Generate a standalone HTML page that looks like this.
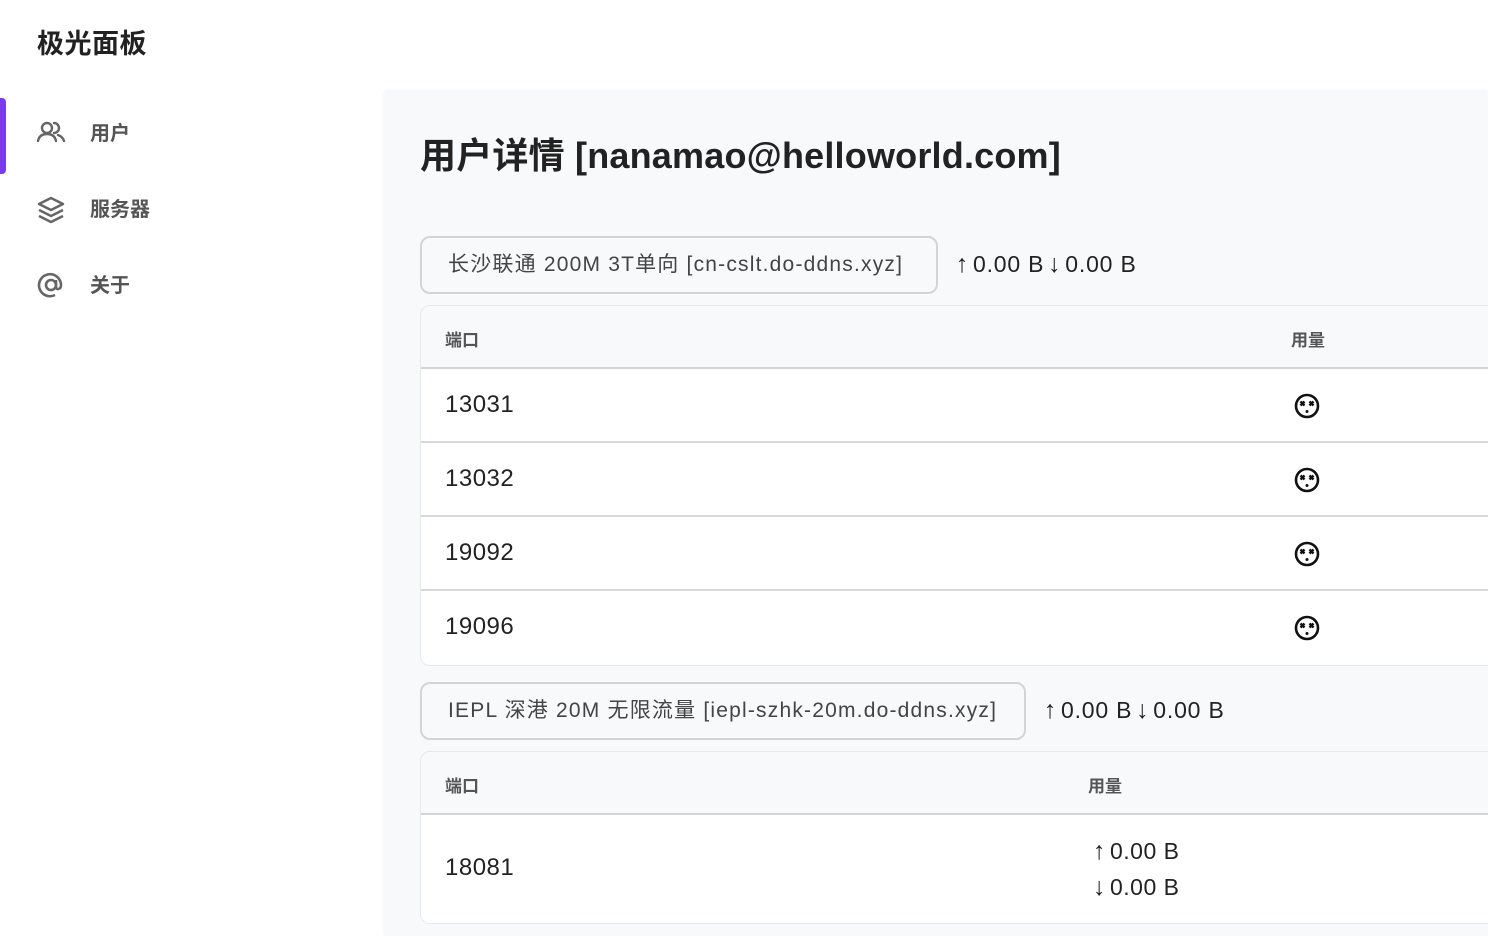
<!DOCTYPE html>
<html><head><meta charset="utf-8"><style>
*{margin:0;padding:0;box-sizing:border-box}
body{width:1488px;height:936px;overflow:hidden;background:#fff;font-family:"Liberation Sans","Noto Sans CJK SC",sans-serif;position:relative;color:#222}
.logo{position:absolute;left:37px;top:22px;font-size:27px;font-weight:bold;color:#222;letter-spacing:0.5px}
.nav{position:absolute;left:0;width:384px;height:76px}
.nav .bar{position:absolute;left:0;top:0;width:6px;height:76px;background:#7c3aed;border-radius:0 4px 4px 0}
.nav svg{position:absolute;left:37px;top:21px}
.nav span{position:absolute;left:90px;top:19px;font-size:20px;color:#555;font-weight:bold}
.main{position:absolute;left:384px;top:92px;right:0;bottom:0;background:#f8f9fb;box-shadow:0 -1px 4px rgba(0,0,0,.05)}
h1{position:absolute;left:420px;top:127px;font-size:36px;font-weight:bold;color:#222;white-space:nowrap;letter-spacing:0.2px}
.btn{position:absolute;left:420px;height:58px;border:2px solid #d4d4d6;border-radius:10px;font-size:21px;color:#444;padding:0 26px;line-height:54px;white-space:nowrap;background:#f8f9fb;letter-spacing:1.2px}
.traffic{position:absolute;font-size:23px;color:#222;white-space:nowrap;letter-spacing:0.8px}
.ar{display:inline-block;width:21px;text-align:center;font-size:25px}
.tbl{position:absolute;left:420px;width:1100px;background:#fff;border:1px solid #e8e8ea;border-radius:10px;overflow:hidden}
.th{height:63px;background:#f8f9fa;border-bottom:2px solid #d4d4d6;position:relative;font-size:17px;color:#555;font-weight:bold}
.th span,.tr span{position:absolute}
.tr{height:74px;border-bottom:2px solid #d8d8da;position:relative;font-size:24px;color:#222;letter-spacing:0.5px}
.tr:last-child{border-bottom:none}
</style></head><body>
<div class="logo">极光面板</div>
<div class="nav" style="top:98px"><div class="bar"></div>
<svg width="30" height="26" viewBox="0 0 30 26" fill="none" stroke="#666" stroke-width="2.4" stroke-linecap="round"><circle cx="10" cy="9" r="5"/><path d="M1 22c1-5 4-7 9-7s8 2 9 7"/><path d="M17 4a5 5 0 0 1 0 10M21 16c3 1 5 3 6 6"/></svg>
<span>用户</span></div>
<div class="nav" style="top:174px">
<svg width="28" height="30" viewBox="0 0 28 30" fill="none" stroke="#666" stroke-width="2.4" stroke-linejoin="round"><path d="M14 3L2 9l12 6 12-6z"/><path d="M2 15l12 6 12-6"/><path d="M2 21l12 6 12-6"/></svg>
<span>服务器</span></div>
<div class="nav" style="top:250px">
<svg width="28" height="28" viewBox="0 0 28 28" fill="none" stroke="#666" stroke-width="2.6"><circle cx="14" cy="14" r="5"/><path d="M19 9v7c0 3 5 3 5-2A11 11 0 1 0 18 24"/></svg>
<span>关于</span></div>
<div class="main"></div>
<h1>用户详情 [nanamao@helloworld.com]</h1>
<div class="btn" style="top:236px;width:518px">长沙联通 200M 3T单向 [cn-cslt.do-ddns.xyz]</div>
<div class="traffic" style="left:952px;top:250px"><span class="ar">↑</span>0.00 B<span class="ar">↓</span>0.00 B</div>
<div class="tbl" style="top:305px">
<div class="th"><span style="left:24px;top:20px">端口</span><span style="left:870px;top:20px">用量</span></div>
<div class="tr"><span style="left:24px;top:22px">13031</span><span style="left:873px;top:24px"><svg width="26" height="26" viewBox="0 0 26 26" fill="none" stroke="#111" stroke-width="2.6"><circle cx="13" cy="13" r="11"/><path d="M6.5 8.5l4 4M10.5 8.5l-4 4M15.5 8.5l4 4M19.5 8.5l-4 4" stroke-width="2.4"/><circle cx="13" cy="18.5" r="1.5" fill="#111" stroke="none"/></svg></span></div>
<div class="tr"><span style="left:24px;top:22px">13032</span><span style="left:873px;top:24px"><svg width="26" height="26" viewBox="0 0 26 26" fill="none" stroke="#111" stroke-width="2.6"><circle cx="13" cy="13" r="11"/><path d="M6.5 8.5l4 4M10.5 8.5l-4 4M15.5 8.5l4 4M19.5 8.5l-4 4" stroke-width="2.4"/><circle cx="13" cy="18.5" r="1.5" fill="#111" stroke="none"/></svg></span></div>
<div class="tr"><span style="left:24px;top:22px">19092</span><span style="left:873px;top:24px"><svg width="26" height="26" viewBox="0 0 26 26" fill="none" stroke="#111" stroke-width="2.6"><circle cx="13" cy="13" r="11"/><path d="M6.5 8.5l4 4M10.5 8.5l-4 4M15.5 8.5l4 4M19.5 8.5l-4 4" stroke-width="2.4"/><circle cx="13" cy="18.5" r="1.5" fill="#111" stroke="none"/></svg></span></div>
<div class="tr"><span style="left:24px;top:22px">19096</span><span style="left:873px;top:24px"><svg width="26" height="26" viewBox="0 0 26 26" fill="none" stroke="#111" stroke-width="2.6"><circle cx="13" cy="13" r="11"/><path d="M6.5 8.5l4 4M10.5 8.5l-4 4M15.5 8.5l4 4M19.5 8.5l-4 4" stroke-width="2.4"/><circle cx="13" cy="18.5" r="1.5" fill="#111" stroke="none"/></svg></span></div>
</div>
<div class="btn" style="top:682px;width:606px">IEPL 深港 20M 无限流量 [iepl-szhk-20m.do-ddns.xyz]</div>
<div class="traffic" style="left:1040px;top:696px"><span class="ar">↑</span>0.00 B<span class="ar">↓</span>0.00 B</div>
<div class="tbl" style="top:751px">
<div class="th"><span style="left:24px;top:20px">端口</span><span style="left:667px;top:20px">用量</span></div>
<div class="tr" style="height:108px"><span style="left:24px;top:39px">18081</span><span style="left:668px;top:18px;font-size:23px;line-height:36px"><span class="ar" style="position:static">↑</span>0.00 B<br><span class="ar" style="position:static">↓</span>0.00 B</span></div>
</div>
</body></html>
